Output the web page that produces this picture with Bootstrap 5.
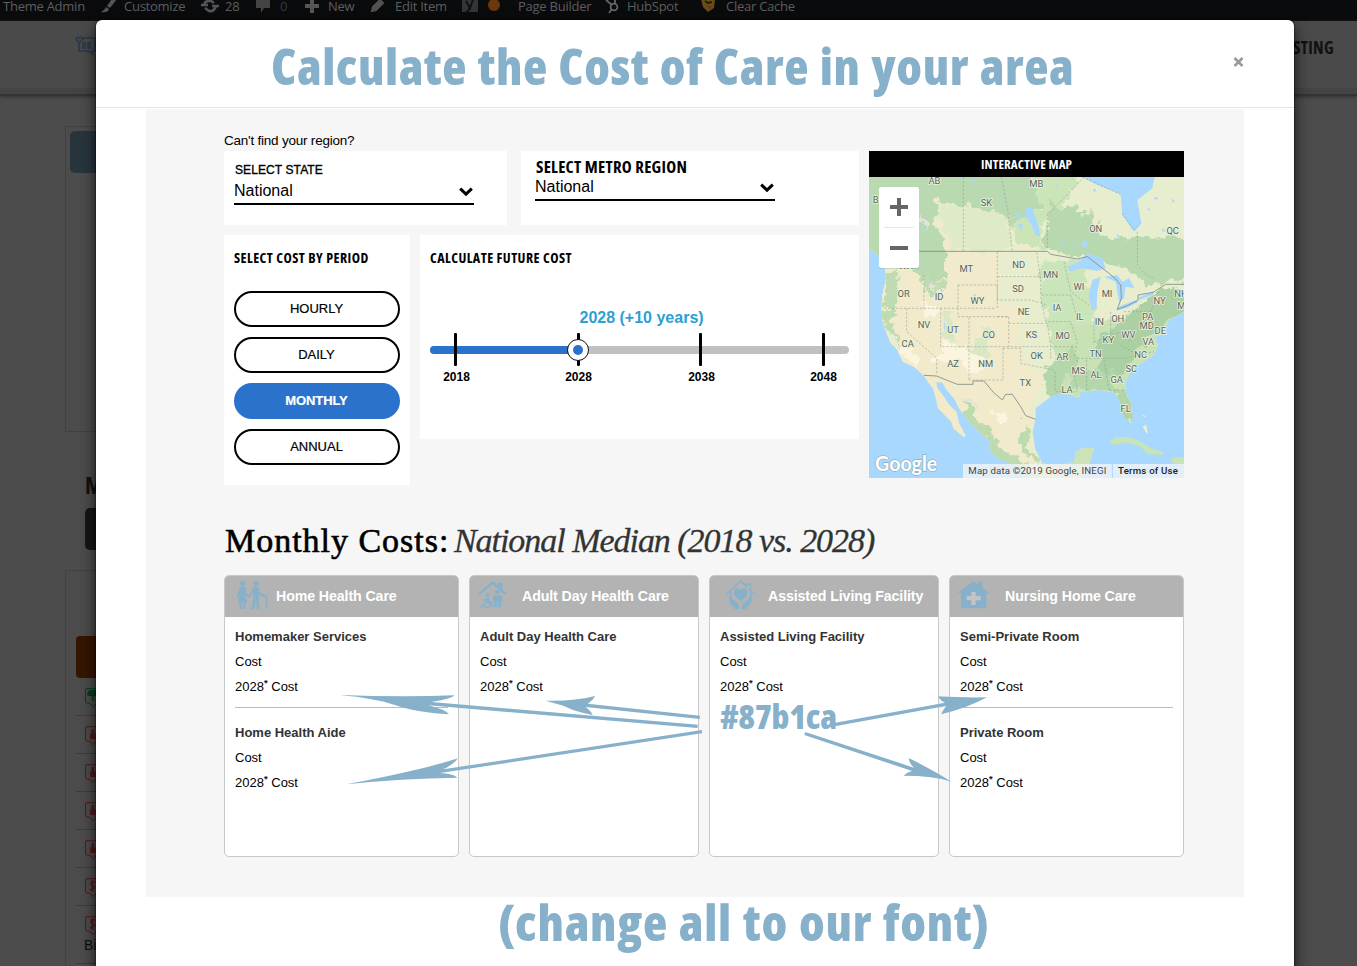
<!DOCTYPE html>
<html lang="en">
<head>
<meta charset="utf-8">
<title>Cost of Care</title>
<link href="https://cdn.jsdelivr.net/npm/bootstrap@5.3.0/dist/css/bootstrap.min.css" rel="stylesheet">
<script src="https://cdn.jsdelivr.net/npm/bootstrap@5.3.0/dist/js/bootstrap.bundle.min.js"></script>
<style>
body{font-family:"Liberation Sans",Arial,sans-serif;font-size:13px;color:#000;background:#4c4c4c;height:966px;overflow:hidden}
.cond{font-family:"Open Sans",sans-serif;font-stretch:75%;font-weight:700;white-space:nowrap}
.adminbar{height:21px;background:#0a0b0d;color:#5d5e5f;font:13px/12px "Open Sans",sans-serif;display:grid;align-items:center;white-space:nowrap;grid-template-rows:12px;
 grid-template-columns:98px 23px 77px 24px 31px 24px 25px 23px 42px 25px 66px 27px 30px 87px 22px 73px 26px 100px;padding:0 0 9px 3px;letter-spacing:-.25px}
.adminbar svg{display:block}
.sitehead{height:75px;background:#4a4a4a;border-bottom:2px solid #333;padding:15px 23px 0 75px;box-shadow:0 1px 3px #333,inset 0 -6px #444}
.sitehead .cond{font-size:17px;color:#111;line-height:24px;letter-spacing:.3px}
.side{width:300px;margin-left:65px}
.box1{height:306px;margin-top:30px;border:1px solid #414141;padding:4px}
.box1 div{height:42px;border-radius:5px;background:#28353d}
.side h4{font:bold 23px/29px "Open Sans",sans-serif;font-stretch:75%;color:#111;margin:39px 0 8px 20px}
.darkbtn{height:42px;border-radius:5px;background:#161616;margin-left:20px}
.box2{margin-top:20px;border:1px solid #414141;padding:65px 0 0 10px;height:420px}
.orbtn{height:42px;border-radius:4px;background:#361600}
.li-row{height:38px;border-bottom:1px solid #3b3b3b;padding:10px 0 0 8px}
.li-row svg{display:block}
.dialog{top:20px;left:96px;width:1198px;height:960px;background:#fff;border-radius:6px;box-shadow:0 5px 15px rgba(0,0,0,.75),0 0 2px #000}
.dhead{height:88px;border-bottom:1px solid #e5e5e5}
.bigtitle{color:#87b1ca;font-weight:800;font-size:50px;line-height:60px;display:inline-block}
.panel{width:1098px;height:788px;margin:1px 0 0 50px;background:#f6f6f6;padding:22px 60px 0 78px}
.top-grid{display:grid;grid-template-columns:635px 315px;column-gap:10px;height:327px}
.wbox{background:#fff;padding:10px}
.wbox .cap{font-size:14px;line-height:26px;letter-spacing:.46px}
.sel{width:240px;border-bottom:2px solid #000;font-size:16px;display:flex;justify-content:space-between}
.pill{display:block;width:166px;height:36px;border:2px solid #000;border-radius:18px;background:#fff;font-size:13px;line-height:30px;text-align:center;margin-bottom:10px;padding:0 1px 0 0;-webkit-text-stroke:.2px}
.pill.on{background:#2a72cc;border-color:#2a72cc;color:#fff;font-weight:700;letter-spacing:-.1px}
.track{position:relative;height:8px;width:419px;border-radius:4px;background:#c1c1c1}
.track .fill{height:8px;width:148px;border-radius:4px;background:#2a72cc}
.tick{position:absolute;top:-13px;width:3px;height:33px;background:#000;border-radius:1px}
.knob{position:absolute;left:137px;top:-7px;width:22px;height:22px;border-radius:50%;background:#fff;border:1.5px solid #111}
.knob:after{content:"";position:absolute;left:4.5px;top:4.5px;width:10px;height:10px;border-radius:50%;background:#2a72cc}
.maphead{height:26px;background:#000;color:#fff;font-size:13px;line-height:26px;text-align:center;letter-spacing:.13px}
.hd{font-family:"Liberation Serif",serif;font-size:34px;line-height:40px;margin:43px 0 0 1px;height:54px;white-space:nowrap;font-weight:400}
.hd span{-webkit-text-stroke:.6px;letter-spacing:.98px}
.hd em{color:#333;-webkit-text-stroke:.3px;letter-spacing:-1.03px;margin-left:-4px}
.cards{display:grid;grid-template-columns:235px 230px 230px 235px;gap:10px;position:relative;height:282px}
.ccard{background:#fff;border:1px solid #c8c8c8;border-radius:5px;overflow:hidden}
.ccard header{height:41px;background:#b3b3b3;color:#fff;font-weight:700;font-size:14.2px;display:flex;align-items:center;letter-spacing:-.1px}
.ccard section{padding:7px 10px 0;line-height:25px}
.ccard section~section{padding-top:0}
.ccard h6{font-size:13px;font-weight:700;line-height:25px;margin:0;color:#333}
.ccard p{margin:0}
.ccard hr{margin:8px 10px 12px;border-top:1px solid #bbb;opacity:1}
.ccard sup{font-size:9.5px;top:-.5em;-webkit-text-stroke:.2px}
.over{position:absolute;left:0;top:0}
.hexnote{left:496px;top:124px;font-size:34px;line-height:34px;color:#87b1ca;font-weight:800;letter-spacing:-.2px}
</style>
</head>
<body>
<svg width="0" height="0" class="position-absolute">
 <symbol id="tag" viewBox="0 0 24 20"><path d="M2 .7H22V15H13L9 18.5L5 15H3Q1.5 15 1.5 13V2Z" fill="none" stroke="currentColor"/></symbol>
 <symbol id="bottle" viewBox="0 0 24 20"><path d="M7.5 3h2.500v4l1.500 1v5H6V8l1.500-1Z" fill="currentColor"/></symbol>
 <symbol id="chev" viewBox="0 0 14 10"><path d="M1.200 1.600L7 7.200L12.800 1.600" fill="none" stroke="#000" stroke-width="3"/></symbol>
</svg>

<div class="adminbar">
 <span>Theme Admin</span>
 <svg width="16" height="14" fill="#555"><path d="M16 0L9 9L6 7L13-3ZM5 8L8 10Q7 14 0 13Q3 12 5 8Z"/></svg>
 <span>Customize</span>
 <svg width="18" height="14" fill="none" stroke="#555" stroke-width="2.6"><path d="M3 6Q4 1 10 2L13 4M15 7Q13 13 8 12L4 9"/><path d="M0 6h7M11 7h7"/></svg>
 <span>28</span>
 <svg width="15" height="14" fill="#444"><path d="M0 0h14v9H8L5 14V9H0Z"/></svg>
 <span style="color:#393a3b">0</span>
 <svg width="14" height="14" fill="#555"><path d="M5 0h4v5h5v4H9v5H5V9H0V5h5Z"/></svg>
 <span>New</span>
 <svg width="15" height="14" fill="none" stroke="#555" stroke-width="2"><path d="M2 12L3 8L10 1L13 4L6 11Z M4 10L11 3"/></svg>
 <span>Edit Item</span>
 <svg width="18" height="15"><path d="M1 0h16v13H1Z" fill="#343536"/><path d="M5 2l4 7L13-2M9 8Q7 14 4 13" stroke="#111" stroke-width="2" fill="none"/></svg>
 <svg width="14" height="14"><circle cx="6" cy="6" r="6" fill="#6b370c"/></svg>
 <span>Page Builder</span>
 <svg width="16" height="16" fill="none" stroke="#666" stroke-width="1.8"><circle cx="9" cy="9" r="3.400"/><path d="M1 2L7 7M10 5V1M7 11L4 15"/></svg>
 <span>HubSpot</span>
 <svg width="18" height="15"><path d="M1 0L15 0L14 9L8 13L3 8Z" fill="#665016"/><path d="M5 2l3 2l4-1" stroke="#211c12" stroke-width="2" fill="none"/><path d="M7 7h5l-2 4Z" fill="#74302a"/></svg>
 <span>Clear Cache</span>
</div>
<div class="sitehead d-flex justify-content-between">
 <svg width="22" height="20" fill="none" stroke="#28394a" stroke-width="1.600"><path d="M8 2H20V15H17L18 18L13 15H4V8"/><path d="M4 7L1 3Q2 0 4 2Q6 0 8 3Z M8 13V7h2v6M13 13V7h2v6"/></svg>
 <span class="cond">LISTING</span>
</div>
<div class="side">
 <div class="box1"><div></div></div>
 <h4>Map</h4>
 <div class="darkbtn"></div>
 <div class="box2">
  <div class="orbtn"></div>
  <div class="li-row" style="color:#063e20"><svg width="24" height="20"><use href="#tag"/><path d="M3 7Q3 2 8 2H16V8H4Z M8 8h1.500v5H8Z" fill="currentColor"/></svg></div>
  <div class="li-row" style="color:#521a1d"><svg width="24" height="20"><use href="#tag"/><use href="#bottle"/></svg></div>
  <div class="li-row" style="color:#521a1d"><svg width="24" height="20"><use href="#tag"/><use href="#bottle"/></svg></div>
  <div class="li-row" style="color:#521a1d"><svg width="24" height="20"><use href="#tag"/><use href="#bottle"/></svg></div>
  <div class="li-row" style="color:#521a1d"><svg width="24" height="20"><use href="#tag"/><use href="#bottle"/></svg></div>
  <div class="li-row" style="color:#521a1d"><svg width="24" height="20"><use href="#tag"/><path d="M11 4H7.500Q6 7 9 8Q12 10 6 12M8.500 2V14" fill="none" stroke="currentColor" stroke-width="1.500"/></svg></div>
  <div class="li-row" style="color:#521a1d;height:58px"><svg width="24" height="20"><use href="#tag"/><path d="M11 4H7.500Q6 7 9 8Q12 10 6 12M8.500 2V14" fill="none" stroke="currentColor" stroke-width="1.500"/></svg><span style="color:#0e0e0e;font-size:14px;line-height:16px">Billing</span></div>
 </div>
</div>

<main class="dialog position-absolute">
 <div class="dhead d-flex justify-content-between">
  <div style="padding:16px 0 0 175px"><span class="cond bigtitle" style="letter-spacing:.55px;word-spacing:1.400px">Calculate the Cost of Care in your area</span></div>
  <svg width="11" height="10" style="margin:37px 50px 0 0"><path d="M1.500 1L9.500 9M9.500 1L1.500 9" stroke="#999" stroke-width="2.600"/></svg>
 </div>
 <div class="panel">
  <div style="height:20px;line-height:19px;font-size:13.500px;letter-spacing:-.22px">Can't find your region?</div>
  <div class="top-grid">
   <div>
    <div class="d-flex" style="height:74px;gap:14px;margin-bottom:10px">
     <div class="wbox" style="width:283px;padding-top:9px">
      <div style="line-height:20px;height:19px;font-size:12px;-webkit-text-stroke:.35px;padding-left:1px;letter-spacing:.1px">SELECT STATE</div>
      <div class="sel" style="line-height:24px;height:26px">National<svg width="14" height="10" style="margin:8px 1px"><use href="#chev"/></svg></div>
     </div>
     <div class="wbox" style="width:338px;padding:6px 14px">
      <div class="cond" style="line-height:20px;font-size:16.800px;padding-left:1px;letter-spacing:.28px">SELECT METRO REGION</div>
      <div class="sel" style="line-height:19px;height:24px">National<svg width="14" height="10" style="margin:6px 1px"><use href="#chev"/></svg></div>
     </div>
    </div>
    <div class="d-flex" style="gap:10px">
     <div class="wbox" style="width:186px;height:250px">
      <div class="cond cap" style="height:46px">SELECT COST BY PERIOD</div>
      <button class="pill">HOURLY</button><button class="pill">DAILY</button><button class="pill on">MONTHLY</button><button class="pill">ANNUAL</button>
     </div>
     <div class="wbox" style="width:439px;height:204px">
      <div class="cond cap" style="height:63px">CALCULATE FUTURE COST</div>
      <div style="color:#2d9fd0;font-weight:700;font-size:16px;line-height:20px;padding-left:149.500px;height:38px">2028 (+10 years)</div>
      <div class="track"><div class="fill"></div>
       <i class="tick" style="left:24px"></i><i class="tick" style="left:147px"></i><i class="tick" style="left:269px"></i><i class="tick" style="left:392px"></i>
       <div class="knob"></div>
      </div>
      <div class="d-flex fw-bold" style="font-size:12px;line-height:16px;margin:15px 0 0 4px"><span class="text-center" style="width:45px">2018</span><span class="text-center" style="width:45px;margin-left:77px">2028</span><span class="text-center" style="width:45px;margin-left:78px">2038</span><span class="text-center" style="width:45px;margin-left:77px">2048</span></div>
     </div>
    </div>
   </div>
   <div>
    <div class="maphead cond">INTERACTIVE MAP</div>
    <svg class="d-block" width="315" height="301" viewBox="15 96 945 903" font-family="Roboto,sans-serif">
     <defs><clipPath id="land"><path d="M15 96V308L40 330L60 355L66 400L55 450L52 490L55 530L68 565L80 595L98 612L117 650L150 665L180 692L195 715L207 730L217 765L222 790L240 808L262 830L268 850L300 877L305 872L285 835L277 800L255 780L240 755L220 730L216 712L235 712L248 735L270 760L285 790L310 825L345 860L380 892L376 915L400 940L440 955L500 999H650L675 960L690 910L660 908L636 920L630 950L575 963L535 955L513 910L506 860L515 823L515 790L560 755L590 745L620 750L645 758L650 740L700 735L730 738L755 745L768 775L780 818L800 834L807 815L800 775L785 740L785 710L800 680L838 650L870 630L882 600L872 575L890 570L915 525L960 500V96Z"/></clipPath>
     <filter id="soft" x="-10%" y="-10%" width="120%" height="120%"><feTurbulence type="fractalNoise" baseFrequency=".03" numOctaves="4" seed="4"/><feDisplacementMap in="SourceGraphic" scale="60" xChannelSelector="R" yChannelSelector="G"/></filter></defs>
     <path fill="#a8d8fd" d="M15 96H960V999H15Z"/>
     <g clip-path="url(#land)">
      <path fill="#e7edcd" d="M15 96H960V999H15Z"/>
      <g filter="url(#soft)">
       <path fill="#f1eacb" d="M225 175L440 205L545 310L400 325L400 470L470 510L475 660L560 680L500 790L510 1030H200L20 640L60 380L130 370L240 330Z"/>
       <path fill="#b9d9b0" d="M-30 50H420L560 130L520 200L430 235L400 205L290 185L215 170L220 250L250 330L240 400L180 415L130 350L-30 300Z"/>
       <path fill="#dfebc8" d="M220 180L300 190L430 210L450 320L260 322Z"/>
       <path fill="#cbe5b9" d="M500 60L660 60L600 190L530 240L540 320L470 300L440 230L530 200Z"/>
       <path fill="#b8d9b0" d="M560 170L680 200L720 280L1000 280V400L870 420L810 390L720 340L600 330L540 310Z"/>
       <path fill="#cae5b9" d="M530 350L650 350L690 470L680 560L560 560L530 480Z"/>
       <path fill="#c8e2b5" d="M560 560L850 500L1000 440V620L780 750L550 790L580 680Z"/>
       <path fill="#abd0a4" d="M700 590L900 430L1000 430L940 520L850 580L770 680L700 700Z"/>
       <path fill="#b3d6aa" d="M545 660L630 600L650 650L600 700L590 760L540 740Z M620 680H760L750 735L640 735Z"/>
       <path fill="#bedbb1" d="M60 400L90 360L105 450L85 550L65 560Z M45 520L80 540L120 610L100 600Z M180 400L250 410L210 450L180 440Z"/>
       <path fill="#bedab1" d="M290 760L370 850L400 900L480 940L530 999L420 990L340 940L310 850Z M480 830L500 850L490 900L530 940L515 950L465 890Z"/>
       <path fill="#d9e8c2" d="M350 550L390 570L360 650L320 620Z M240 500L270 500L260 590L230 570Z"/>
       <path fill="#cbe3b6" d="M620 880H720V1030H520V960Z"/>
       <path fill="#b1d5a8" d="M740 740L790 740L830 840L770 820Z"/>
       <path fill="#e7edcf" d="M740 60H1000V260L850 280L740 240Z M30 540L70 550L140 640L110 640Z"/>
       <path fill="#fbf5df" d="M240 590L330 610L370 670L320 690L290 650L200 650Z M380 800L440 810L430 830L390 820Z M120 600L180 650L150 660L110 630Z M170 470L220 500L190 520Z"/>
       <path fill="#e2e2d8" d="M170 210L200 245L190 260L165 225Z M290 750L340 775L340 790L310 775Z M200 400L220 430L200 435Z"/>
      </g>
     </g>
     <g fill="#a8d8fd">
      <path d="M655 96L700 120L770 148L775 210L810 260L832 235L820 165L865 130L872 96Z"/>
      <path d="M485 185L505 190L520 230L530 275L515 270L500 235L485 215Z M455 205L470 200L465 225Z M460 235L478 240L470 255Z"/>
      <path d="M610 365L645 350L670 325L715 340L725 370L700 378L650 370L620 380Z"/>
      <path d="M685 405L710 395L700 440L697 492L683 495L675 450Z"/>
      <path d="M720 395L760 390L775 410L795 400L812 430L785 425L780 460L765 470L755 410Z"/>
      <path d="M755 497L770 482L815 465L822 472L785 490Z M822 458L870 438L868 450L825 465Z"/>
      <path d="M655 290L670 285L668 305L655 308Z M295 100l6 10l-6-2Z M325 102l14 8l-10 8Z M760 265l8 12l-10-2Z M240 520l4 35l-5-5Z M230 430l10 8l-8 4Z"/>
      <path d="M870 155l15 5l-12 4Z M925 160l8 10l-9 2Z M895 250l10 6l-9 6Z M180 240l3 25l-6-15Z M405 155l10 3l-6 5Z M690 130l8 8l-10 2Z M590 290l14 4l-12 5Z M330 445l8 6l-9 4Z M640 300l-14 12l4-10Z M850 190l8 3l-5 6Z M575 120l8 4l-7 5Z"/>
     </g>
     <g fill="#c7e4b8"><path d="M735 890L755 877L790 875L830 890L860 910L895 920L900 930L850 927L830 905L785 892L750 900Z M920 940L960 935V960L925 955Z"/><path d="M833 808l12 5l-3 4Z M836 845l10-6l6 26l-5-2Z" fill="#ecefd8"/></g>
     <g fill="none" stroke="#8f9d93" stroke-opacity=".75" stroke-width="2.200" stroke-dasharray="7 5">
      <path d="M298 96V320M412 96L432 200L444 320M550 310V210L660 96M655 96L770 148M775 205L810 255L830 235M820 260V360Q840 390 870 400"/>
      <path d="M60 490H395M180 390V490M128 490V560L218 640V690M230 490V605H555M282 420V490M282 420H400V490M400 320V465M282 490V515H315V705M400 395H527M397 465H500L550 480M315 515H434V605M434 535H550L560 605V640M518 322L530 400V450H620M400 515H434M417 610H470V655L570 675M417 610V705H315M530 455L545 530H620L640 590L630 640M560 605H635M640 640H780L870 620M640 645L630 690L640 735M573 680V740M668 645V735M720 645L735 735M575 740H640M690 515V600M740 500V570M690 590L770 560L800 590M620 450L640 520M600 350L620 440L675 480M780 500H860V555M860 500L885 440M770 600L840 640M735 735H785"/>
     </g>
     <path fill="none" stroke="#7d8c88" stroke-width="2.500" d="M60 319H550L560 328L600 335L640 342L670 335L735 385L755 402L770 420L772 460L760 493L790 482L822 466V450L868 442L905 418H960"/>
     <path fill="none" stroke="#7d8c88" stroke-width="2.500" d="M180 691L217 693L280 718H327V708H360L388 742L415 765L425 748H445L470 785L485 812L515 823"/>
     <g font-size="28" text-anchor="middle" fill="#52645b" stroke="#eef2dd" stroke-width="5" paint-order="stroke" stroke-linejoin="round">
      <text x="211" y="118">AB</text><text x="517" y="127">MB</text><text x="367" y="184">SK</text><text x="35" y="175">B</text><text x="695" y="262">ON</text><text x="926" y="268">QC</text><text x="125" y="373">WA</text>
      <text x="307" y="382">MT</text><text x="464" y="370">ND</text><text x="560" y="400">MN</text><text x="119" y="457">OR</text><text x="225" y="466">ID</text><text x="340" y="478">WY</text><text x="462" y="442">SD</text><text x="645" y="436">WI</text><text x="729" y="456">MI</text><text x="887" y="478">NY</text><text x="951" y="456">NH</text><text x="952" y="493">M</text><text x="479" y="511">NE</text><text x="579" y="499">IA</text><text x="647" y="524">IL</text>
      <text x="180" y="550">NV</text><text x="267" y="565">UT</text><text x="374" y="580">CO</text><text x="502" y="580">KS</text><text x="596" y="583">MO</text><text x="706" y="541">IN</text><text x="761" y="532">OH</text><text x="851" y="526">PA</text><text x="848" y="553">MD</text><text x="889" y="568">DE</text><text x="793" y="580">WV</text><text x="733" y="595">KY</text><text x="853" y="601">VA</text><text x="131" y="607">CA</text>
      <text x="518" y="643">OK</text><text x="595" y="646">AR</text><text x="695" y="637">TN</text><text x="830" y="640">NC</text><text x="267" y="667">AZ</text><text x="365" y="667">NM</text><text x="643" y="688">MS</text><text x="696" y="700">AL</text><text x="802" y="682">SC</text><text x="758" y="715">GA</text><text x="484" y="724">TX</text><text x="609" y="745">LA</text><text x="785" y="800">FL</text>
     </g>
     <path fill="#f5f5f5" fill-opacity=".75" d="M297 957H960V999H297Z"/><path stroke="#a8d8fd" stroke-width="3" d="M745 957V999"/>
     <g font-size="29" fill="#444"><text x="313" y="987" textLength="414">Map data ©2019 Google, INEGI</text><text x="762" y="987" textLength="180" font-weight="500" fill="#222">Terms of Use</text></g>
     <text x="33" y="977" font-family="Lato,sans-serif" font-weight="700" font-size="60" textLength="187" lengthAdjust="spacingAndGlyphs" fill="#fff" stroke="#8bb0c8" stroke-width="4" paint-order="stroke">Google</text>
     <rect x="45" y="126" width="120" height="243" rx="6" fill="#fff" style="filter:drop-shadow(0 1px 2px rgba(0,0,0,.3))"/>
     <path d="M60 247H150" stroke="#e6e6e6" stroke-width="3"/><path d="M78 186H132M105 159V213M78 309H132" stroke="#666" stroke-width="12"/>
    </svg>
   </div>
  </div>
  <h2 class="hd"><span>Monthly Costs:</span> <em>National Median (2018 vs. 2028)</em></h2>
  <div class="cards">
   <article class="ccard"><header><svg width="32" height="30" viewBox="0 0 96 90" style="margin:0 8px 3px 11px" fill="#87b1ca"><circle cx="20" cy="10" r="8"/><circle cx="61" cy="10" r="8"/><path d="M12 20H27L30 38L42 48L38 53L27 43L34 69H28V87H22V69H18V87H11V69H5L12 40L6 53L2 50Z"/><path d="M53 20H66L72 36L86 46L92 45L94 50V87H90V53L84 52L69 44L68 55L70 87H63L60 60L54 87H46L52 55L51 36L44 50L39 47Z"/></svg>Home Health Care</header>
    <section><h6>Homemaker Services</h6><p>Cost</p><p>2028<sup>*</sup> Cost</p></section><hr>
    <section><h6>Home Health Aide</h6><p>Cost</p><p>2028<sup>*</sup> Cost</p></section></article>
   <article class="ccard"><header><svg width="31" height="30" viewBox="0 0 93 90" style="margin:0 14px 3px 7px" fill="#87b1ca"><path d="M2 42L47 3L62 15V8H77V28L91 42H81L47 13L12 42Z"/><circle cx="32" cy="46" r="6"/><path d="M29 54H36L38 65H45L50 77L45 80L40 71H31L25 63L16 60Z"/><path d="M24 65Q14 82 31 82Q40 82 41 75" fill="none" stroke="#87b1ca" stroke-width="4"/><path d="M10 78L20 71V82H10Z"/><circle cx="61" cy="36" r="7"/><path d="M50 46H72Q76 46 76 51V67H72V82H63V67H60V82H52V65H48V50Z"/></svg>Adult Day Health Care</header>
    <section><h6>Adult Day Health Care</h6><p>Cost</p><p>2028<sup>*</sup> Cost</p></section></article>
   <article class="ccard"><header><svg width="31" height="30" viewBox="0 0 93 90" style="margin:0 12px 3px 15px" fill="#87b1ca"><path d="M3 44L47 3L64 19V12H76V30L91 44M17 36V57M77 36V57" fill="none" stroke="#87b1ca" stroke-width="4"/><path d="M47 63Q18 43 29 29Q39 19 47 31Q56 19 66 29Q76 43 47 63Z"/><path d="M13 48Q18 45 22 57L34 67Q43 71 43 88H29L27 80Q14 74 14 65Z M81 48Q75 45 71 57L59 67Q50 71 50 88H64L66 80Q79 74 79 65Z"/></svg>Assisted Living Facility</header>
    <section><h6>Assisted Living Facility</h6><p>Cost</p><p>2028<sup>*</sup> Cost</p></section></article>
   <article class="ccard"><header><svg width="33" height="30" viewBox="0 0 99 90" style="margin:0 15px 3px 7px" fill="#87b1ca"><path fill-rule="evenodd" d="M2 39L49 4L64 14V5H76V23L97 39H88V85H12V39Z"/><path d="M43 36V48H29V61H43V75H56V61H71V48H56V36Z" fill="#c4c4c4"/></svg>Nursing Home Care</header>
    <section><h6>Semi-Private Room</h6><p>Cost</p><p>2028<sup>*</sup> Cost</p></section><hr>
    <section><h6>Private Room</h6><p>Cost</p><p>2028<sup>*</sup> Cost</p></section></article>
   <svg class="over" width="960" height="282" viewBox="224 575 960 282" fill="#87b1ca">
    <g transform="translate(215 515) scale(.33333)">
     <path d="M375 540Q560 547 718 541Q715 550 650 561L1449 629L1447 639L640 571Q690 583 702 598Q600 592 540 570Q480 550 375 540Z"/>
     <path d="M992 557Q1080 559 1140 543Q1135 555 1118 566L1455 602L1454 612L1112 576Q1130 590 1133 600Q1080 590 1045 572Z"/>
     <path d="M393 808Q490 790 560 774Q650 755 729 730Q720 745 685 763L1461 645V655L675 774Q715 776 727 788Q560 790 393 808Z"/>
    </g>
    <g transform="translate(700 515) scale(.33333)">
     <path d="M861 547Q780 548 715 544Q718 555 735 563L402 624L404 634L738 573Q730 585 723 598Q800 580 861 547Z"/>
     <path d="M755 800Q690 760 626 729Q627 745 642 758L316 651L313 660L636 768Q617 774 611 782Q700 782 755 800Z"/>
    </g>
   </svg>
   <div class="over cond hexnote">#87b1ca</div>
  </div>
 </div>
 <div style="padding:0 0 0 402px;margin-top:-5px"><span class="cond bigtitle" style="letter-spacing:.75px;word-spacing:1.400px">(change all to our font)</span></div>
</main>
</body>
</html>
